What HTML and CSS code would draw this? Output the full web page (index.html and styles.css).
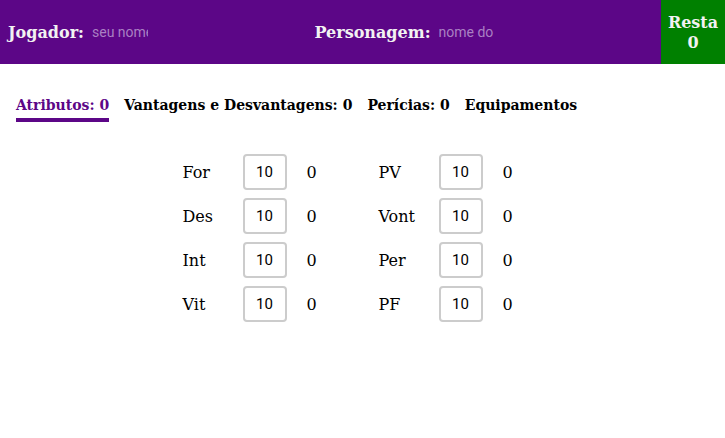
FILE: index.html
```html
<!DOCTYPE html>
<html lang="pt-BR">
<head>
<meta charset="utf-8">
<meta name="viewport" content="width=device-width, initial-scale=1">
<title>Ficha de personagem</title>
<link rel="stylesheet" href="styles.css">
</head>
<body>
<header class="topbar">
  <div class="identity">
    <div class="field">
      <label for="jogador">Jogador:</label>
      <input id="jogador" type="text" placeholder="seu nome">
    </div>
    <div class="field">
      <label for="personagem">Personagem:</label>
      <input id="personagem" type="text" placeholder="nome do personagem">
    </div>
  </div>
  <div class="remaining"><span>Resta</span><span>0</span></div>
</header>
<nav class="tabs">
  <a class="tab active" href="#atributos">Atributos: 0</a>
  <a class="tab" href="#vantagens">Vantagens e Desvantagens: 0</a>
  <a class="tab" href="#pericias">Perícias: 0</a>
  <a class="tab" href="#equipamentos">Equipamentos</a>
</nav>
<main class="attributes" id="atributos">
  <div class="group">
    <div class="row"><label for="for">For</label><input id="for" type="text" inputmode="numeric" value="10"><output for="for">0</output></div>
    <div class="row"><label for="des">Des</label><input id="des" type="text" inputmode="numeric" value="10"><output for="des">0</output></div>
    <div class="row"><label for="int">Int</label><input id="int" type="text" inputmode="numeric" value="10"><output for="int">0</output></div>
    <div class="row"><label for="vit">Vit</label><input id="vit" type="text" inputmode="numeric" value="10"><output for="vit">0</output></div>
  </div>
  <div class="group">
    <div class="row"><label for="pv">PV</label><input id="pv" type="text" inputmode="numeric" value="10"><output for="pv">0</output></div>
    <div class="row"><label for="vont">Vont</label><input id="vont" type="text" inputmode="numeric" value="10"><output for="vont">0</output></div>
    <div class="row"><label for="per">Per</label><input id="per" type="text" inputmode="numeric" value="10"><output for="per">0</output></div>
    <div class="row"><label for="pf">PF</label><input id="pf" type="text" inputmode="numeric" value="10"><output for="pf">0</output></div>
  </div>
</main>
</body>
</html>
```
FILE: styles.css
```css
* {
  box-sizing: border-box;
}

body {
  margin: 0;
  background: #fff;
  color: #000;
  font: 16px/20px "DejaVu Serif", serif;
}

.topbar {
  display: flex;
  min-height: 64px;
  background: #5c0687;
  color: #f2f2f2;
  font-weight: bold;
}

.identity {
  display: flex;
  flex: 1;
  padding-right: 8px;
}

.field {
  display: flex;
  flex: 1 1 auto;
  align-items: center;
  gap: 8px;
  padding-left: 8px;
}

.field label,
.remaining,
.row label,
.row output {
  padding-top: 2px;
}

.field input {
  width: 56px;
  height: 24px;
  padding: 0;
  border: 0;
  background: transparent;
  color: #f2f2f2;
  font: 14px Roboto, sans-serif;
}

.field input::placeholder {
  color: #aa80c3;
  opacity: 1;
}

.remaining {
  display: flex;
  flex-direction: column;
  align-items: center;
  justify-content: center;
  width: 64px;
  background: #008000;
}

.tabs {
  display: flex;
  gap: 15px;
  padding: 32px 16px;
  font-size: 14px;
  font-weight: bold;
}

.tab {
  padding-bottom: 4px;
  border-bottom: 4px solid transparent;
  color: #000;
  line-height: 18px;
  text-decoration: none;
}

.tab.active {
  border-color: #5c0687;
  color: #5c0687;
}

.attributes {
  display: flex;
  justify-content: center;
}

.group {
  display: grid;
  gap: 8px;
  width: 196px;
  padding-left: 16px;
}

.row {
  display: grid;
  grid-template-columns: 60px 44px 1fr;
  align-items: center;
}

.row input {
  width: 44px;
  height: 36px;
  padding: 0;
  border: 2px solid #ccc;
  border-radius: 4px;
  background: #fff;
  color: #000;
  font: 15px Roboto, sans-serif;
  text-align: center;
}

.row output {
  padding-left: 20px;
}
```
